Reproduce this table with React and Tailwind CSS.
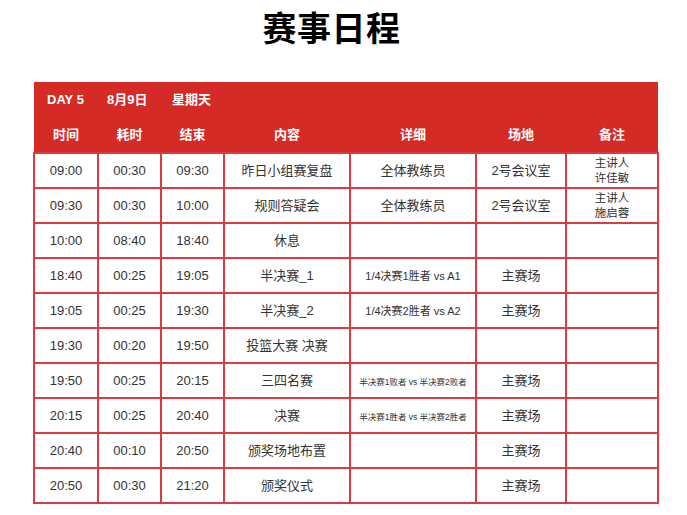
import React from "react";

const rows = [
  { start: "09:00", dur: "00:30", end: "09:30", content: "昨日小组赛复盘", detail: "全体教练员", place: "2号会议室", note: ["主讲人", "许佳敏"] },
  { start: "09:30", dur: "00:30", end: "10:00", content: "规则答疑会", detail: "全体教练员", place: "2号会议室", note: ["主讲人", "施启蓉"] },
  { start: "10:00", dur: "08:40", end: "18:40", content: "休息", detail: "", place: "", note: null },
  { start: "18:40", dur: "00:25", end: "19:05", content: "半决赛_1", detail: "1/4决赛1胜者 vs A1", detailSize: "sm", place: "主赛场", note: null },
  { start: "19:05", dur: "00:25", end: "19:30", content: "半决赛_2", detail: "1/4决赛2胜者 vs A2", detailSize: "sm", place: "主赛场", note: null },
  { start: "19:30", dur: "00:20", end: "19:50", content: "投篮大赛 决赛", detail: "", place: "", note: null },
  { start: "19:50", dur: "00:25", end: "20:15", content: "三四名赛", detail: "半决赛1败者 vs 半决赛2败者", detailSize: "xs", place: "主赛场", note: null },
  { start: "20:15", dur: "00:25", end: "20:40", content: "决赛", detail: "半决赛1胜者 vs 半决赛2胜者", detailSize: "xs", place: "主赛场", note: null },
  { start: "20:40", dur: "00:10", end: "20:50", content: "颁奖场地布置", detail: "", place: "主赛场", note: null },
  { start: "20:50", dur: "00:30", end: "21:20", content: "颁奖仪式", detail: "", place: "主赛场", note: null },
];

const headers = ["时间", "耗时", "结束", "内容", "详细", "场地", "备注"];

const cell = "border-2 border-[#db3a42] h-[35px] p-0 text-center align-middle";

const App = () => {
  return (
    <div
      className="w-[687px] h-[515px] bg-white overflow-hidden text-[#333]"
      style={{ fontFamily: '"Liberation Sans", Arial, "Noto Sans CJK SC", sans-serif' }}
    >
      <div className="pt-[10px] pr-6 text-center">
        <h1 className="text-[34px] leading-[38px] font-bold text-black tracking-[0.5px]">赛事日程</h1>
      </div>

      <div className="ml-[33px] mt-[34px] w-[624px]">
        <table className="w-[624px] table-fixed border-collapse">
          <colgroup>
            <col className="w-[64px]" />
            <col className="w-[63px]" />
            <col className="w-[63px]" />
            <col className="w-[126px]" />
            <col className="w-[126px]" />
            <col className="w-[90px]" />
            <col className="w-[92px]" />
          </colgroup>
          <thead>
            <tr className="bg-[#d42b27] text-white">
              <th colSpan={7} className="h-[36px] p-0 text-left font-bold text-[13px]">
                <div className="flex items-center pl-[13px]">
                  <span className="w-[60px]">DAY 5</span>
                  <span className="w-[65px]">8月9日</span>
                  <span>星期天</span>
                </div>
              </th>
            </tr>
            <tr className="bg-[#d42b27] text-white">
              {headers.map((h) => (
                <th key={h} className="h-[35px] p-0 text-center font-bold text-[13px]">
                  {h}
                </th>
              ))}
            </tr>
          </thead>
          <tbody className="text-[13px]">
            {rows.map((r) => (
              <tr key={r.start}>
                <td className={cell}>{r.start}</td>
                <td className={cell}>{r.dur}</td>
                <td className={cell}>{r.end}</td>
                <td className={cell}>{r.content}</td>
                <td className={cell}>
                  {r.detailSize === "xs" ? (
                    <span className="text-[8.5px]">{r.detail}</span>
                  ) : r.detailSize === "sm" ? (
                    <span className="text-[11px]">{r.detail}</span>
                  ) : (
                    r.detail
                  )}
                </td>
                <td className={cell}>{r.place}</td>
                <td className={cell}>
                  {r.note && (
                    <div className="flex flex-col items-center text-[11.5px] leading-[15px]">
                      <span>{r.note[0]}</span>
                      <span>{r.note[1]}</span>
                    </div>
                  )}
                </td>
              </tr>
            ))}
          </tbody>
        </table>
      </div>
    </div>
  );
};

export default App;
